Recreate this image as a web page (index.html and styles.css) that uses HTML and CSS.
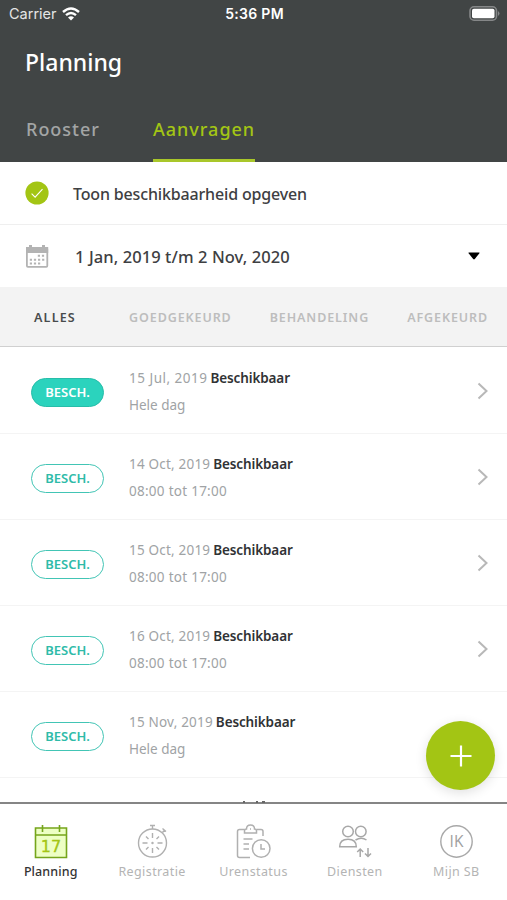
FILE: index.html
```html
<!DOCTYPE html>
<html lang="nl">
<head>
  <meta charset="utf-8" />
  <meta name="viewport" content="width=device-width,initial-scale=1" />
  <title>Planning</title>
  <link rel="stylesheet" href="styles.css">
</head>
<body>
  <div class="app">
    <header class="header">
      <div class="status-bar">
        <div class="carrier">
          <span>Carrier</span>
          <svg width="18" height="14" viewBox="0 0 18 14" fill="none" stroke="#fff" stroke-width="2.4">
            <path d="M1 5Q9-2 17 5M4 8.2Q9 3.8 14 8.2"/>
            <path d="M9 13.5L6 10.5Q9 8 12 10.5Z" fill="#fff" stroke="none"/>
          </svg>
        </div>
        <span class="time">5:36 PM</span>
        <svg class="battery" width="31" height="15" viewBox="0 0 31 15">
          <rect x="1" y=".8" width="26.5" height="13.4" rx="4" fill="none" stroke="#858788" stroke-width="1.6"/>
          <rect x="3" y="2.7" width="22.5" height="9.6" rx="1.8" fill="#fff"/>
          <path d="M29 5q3 2.5 0 5z" fill="#858788"/>
        </svg>
      </div>
      <h1>Planning</h1>
      <nav class="tabs">
        <a class="tab"><span>Rooster</span></a>
        <a class="tab active"><span>Aanvragen</span></a>
      </nav>
    </header>

    <div class="option">
      <svg class="check" width="24" height="24" viewBox="0 0 24 24">
        <circle cx="12" cy="12" r="11.6" fill="#a3c514"/>
        <path d="M6.6 12.6l3.5 3.5 7.4-8" fill="none" stroke="#fff" stroke-width="1.1"/>
      </svg>
      <span class="show-label">Toon beschikbaarheid opgeven</span>
    </div>
    <div class="option period">
      <svg class="cal" width="24" height="24" viewBox="0 0 24 24">
        <rect x="1.900" y="3" width="20.400" height="18.800" rx="1" fill="#fff" stroke="#b3b3b3" stroke-width="1.8"/>
        <path d="M1 2h22.200v6H1zM4 0h3v3H4zM17 0h3v3h-3z" fill="#b3b3b3"/>
        <path d="M12.800 10.800h7.400M4.800 14.800h15.400M4.800 18.600h11.500" stroke="#b3b3b3" stroke-width="2" stroke-dasharray="2.200 1.900"/>
      </svg>
      <span class="period-label">1 Jan, 2019 t/m 2 Nov, 2020</span>
      <svg class="caret" width="12" height="8" viewBox="0 0 12 8"><path d="M1 .4h10q1 0 .4.9L6.8 7q-.8.8-1.6 0L.6 1.3Q0 .4 1 .4z"/></svg>
    </div>

    <div class="filters">
      <span class="filter active">ALLES</span>
      <span class="filter">GOEDGEKEURD</span>
      <span class="filter">BEHANDELING</span>
      <span class="filter">AFGEKEURD</span>
    </div>

    <main class="list">
      <div class="row">
        <div class="badge filled"><span>BESCH.</span></div>
        <div class="info">
          <p class="date"><span class="short">15 Jul, 2019</span><b>Beschikbaar</b></p>
          <p class="day">Hele dag</p>
        </div>
        <svg class="chevron" width="12" height="18" viewBox="0 0 12 18"><path d="M1.5 1.5L9.5 9l-8 7.5"/></svg>
      </div>
      <div class="row">
        <div class="badge"><span>BESCH.</span></div>
        <div class="info">
          <p class="date"><span>14 Oct, 2019</span><b>Beschikbaar</b></p>
          <p class="hours">08:00 tot 17:00</p>
        </div>
        <svg class="chevron" width="12" height="18" viewBox="0 0 12 18"><path d="M1.5 1.5L9.5 9l-8 7.5"/></svg>
      </div>
      <div class="row">
        <div class="badge"><span>BESCH.</span></div>
        <div class="info">
          <p class="date"><span>15 Oct, 2019</span><b>Beschikbaar</b></p>
          <p class="hours">08:00 tot 17:00</p>
        </div>
        <svg class="chevron" width="12" height="18" viewBox="0 0 12 18"><path d="M1.5 1.5L9.5 9l-8 7.5"/></svg>
      </div>
      <div class="row">
        <div class="badge"><span>BESCH.</span></div>
        <div class="info">
          <p class="date"><span>16 Oct, 2019</span><b>Beschikbaar</b></p>
          <p class="hours">08:00 tot 17:00</p>
        </div>
        <svg class="chevron" width="12" height="18" viewBox="0 0 12 18"><path d="M1.5 1.5L9.5 9l-8 7.5"/></svg>
      </div>
      <div class="row">
        <div class="badge"><span>BESCH.</span></div>
        <div class="info">
          <p class="date"><span>15 Nov, 2019</span><b>Beschikbaar</b></p>
          <p class="day">Hele dag</p>
        </div>
      </div>
      <!-- top edge of the next line, cut off by the tab bar -->
      <svg class="peek" width="24" height="2" viewBox="0 0 24 2"><path d="M1 1h2M14 1h2M20 1h3" stroke="#666" stroke-width="2"/></svg>
      <button class="add" aria-label="Toevoegen">
        <svg width="22" height="22" viewBox="0 0 22 22" stroke="#fff" stroke-width="2.2"><path d="M11 .5v21M.5 11h21"/></svg>
      </button>
    </main>

    <nav class="tabbar">
      <a class="item planning">
        <svg width="36" height="36" viewBox="0 0 36 36" fill="none" stroke="#75a51b" stroke-width="1.6">
          <path d="M2.500 4h31v29.500h-31z" fill="#edffc4"/>
          <path d="M2 11h32M9.500 1v7M26.500 1v7"/>
          <text x="18" y="27.500" text-anchor="middle">17</text>
        </svg>
        <span>Planning</span>
      </a>
      <a class="item">
        <svg width="36" height="36" viewBox="0 0 36 36" fill="none" stroke="#b0b0b0" stroke-width="1.4">
          <circle cx="18.500" cy="19" r="14"/>
          <path d="M18.500 5V1.500M16 1.500h5M28.500 8.500l2-2.500M28.500 4.500l3.500 3"/>
          <path d="M18.500 9v5M18.500 24v5M8.500 19h5M23.500 19h5M12 12.500l2.500 2.500M25 12.500l-2.500 2.500M12 25.500l2.500-2.500M25 25.500l-2.500-2.500"/>
          <circle cx="18.500" cy="19" r=".5" fill="#b0b0b0"/>
        </svg>
        <span>Registratie</span>
      </a>
      <a class="item">
        <svg width="36" height="36" viewBox="0 0 36 36" fill="none" stroke="#b0b0b0" stroke-width="1.5">
          <path d="M15 33.500H4.500q-2 0-2-2V7.500q0-2 2-2h5.200M21.500 5.500h4.500q2 0 2 2V12"/>
          <path d="M9.500 9V7q0-2 2-2 0-4 4-4t4 4q2 0 2 2v2z"/>
          <path d="M15 5h1M8.500 15h9M8.500 20h5.500M8.500 25h5.500"/>
          <circle cx="26.200" cy="24.500" r="8.800"/>
          <path d="M26 20v5h4"/>
        </svg>
        <span>Urenstatus</span>
      </a>
      <a class="item">
        <svg width="36" height="36" viewBox="0 0 36 36" fill="none" stroke="#a8a8a8" stroke-width="1.5">
          <circle cx="11" cy="7.500" r="5.300"/>
          <circle cx="23.800" cy="7.500" r="5.300"/>
          <path d="M2.700 22.700q0-7.500 8.300-7.500t8.300 7.500zM18.500 16q6-3.500 11 0"/>
          <path d="M23.200 33v-8M20.200 28l3-3 3 3M31 24v8.500M28 29.500l3 3 3-3"/>
        </svg>
        <span>Diensten</span>
      </a>
      <a class="item">
        <svg width="36" height="36" viewBox="0 0 36 36" fill="none" stroke="#a8a8a8" stroke-width="1.4">
          <circle cx="18.500" cy="17.500" r="15.700"/>
          <text class="initials" x="18.500" y="23" text-anchor="middle">IK</text>
        </svg>
        <span>Mijn SB</span>
      </a>
    </nav>
  </div>
</body>
</html>
```

FILE: styles.css
```css
* { box-sizing: border-box; }
body {
  margin: 0;
  background: #fff;
  font-family: "Noto Sans", sans-serif;
  color: #3e4042;
}
.app {
  width: 507px; height: 900px;
  display: flex; flex-direction: column;
  overflow: hidden;
}
svg { display: block; flex: none; }
span, b { white-space: nowrap; }

/* header */
.header {
  height: 162px; flex: none;
  background: #414545; color: #fff;
}
.status-bar {
  height: 27px; padding: 0 7px 0 9px;
  display: grid; grid-template-columns: 1fr auto 1fr; align-items: center;
  font-family: Inter, sans-serif; font-size: 14.5px;
}
.carrier { display: flex; align-items: center; gap: 5px; color: #e4e5e5; }
.time { font-weight: 600; font-size: 14px; letter-spacing: .3px; }
.battery { justify-self: end; }
h1 {
  margin: 19px 0 0 25px;
  font-size: 23px; line-height: 32px; font-weight: 500;
}
.tabs {
  height: 84px; padding-left: 26px;
  display: flex; gap: 53px;
}
.tab {
  height: 84px; padding-top: 37px;
  font-size: 18px; line-height: 28px; font-weight: 500;
  letter-spacing: 1px; color: #a3a5a5;
}
.tab.active { color: #a3c514; border-bottom: 3px solid #a9c72a; }

/* options */
.option {
  height: 63px; flex: none;
  display: flex; align-items: center;
  border-bottom: 1px solid #efefef;
  padding: 0 27px 0 25px;
  font-size: 16px; font-weight: 500;
}
.option.period { height: 62px; border: none; font-size: 16.500px; }
.cal { margin-top: 2px; }
.show-label { margin-left: 24px; padding-top: 2px; letter-spacing: -.16px; }
.period-label { margin-left: 26px; letter-spacing: .08px; }
.caret { margin-left: auto; }

.filters {
  height: 60px; flex: none;
  display: flex; align-items: center; gap: 38px;
  padding: 2px 19px 0 34px;
  background: #f3f3f3; border-bottom: 1.500px solid #d0d0d0;
  font-size: 12.500px; font-weight: 600; color: #bdbdbd;
  letter-spacing: .9px;
}
.filter.active { margin-right: auto; color: #484b4c; letter-spacing: 1.200px; }

/* requests */
.list {
  position: relative; flex: none;
  height: 455px; padding-top: 1px;
}
.row {
  height: 86px; padding: 1px 18px 0 31px;
  display: flex; align-items: center;
  border-bottom: 1px solid #f4f4f4;
}
.badge {
  width: 73px; height: 29px; margin-top: 2px;
  display: flex; align-items: center; justify-content: center;
  border: 1.5px solid #42c5b5; border-radius: 15px;
  color: #2fbba9; font-size: 13px; font-weight: 600;
}
.badge.filled { background: #2bd3bd; border-color: #27bda9; color: #fff; }
.info { margin-left: 25px; padding-top: 2px; }
.info p { margin: 0; font-size: 13.500px; line-height: 27px; color: #a0a3a5; }
.date { display: flex; gap: 3px; }
.date span { letter-spacing: .2px; }
.date .short { letter-spacing: .5px; }
.info .hours { letter-spacing: .27px; }
.info b { font-weight: 600; color: #303234; letter-spacing: -.12px; }
.chevron { margin-left: auto; fill: none; stroke: #b8b8b8; stroke-width: 2; }
.peek { margin: 23px auto 0; }

.add {
  position: absolute; right: 12px; top: 374px;
  width: 69px; height: 69px; padding: 0;
  display: flex; align-items: center; justify-content: center;
  border: none; border-radius: 50%;
  background: #a3c514; box-shadow: 0 3px 12px rgba(0,0,0,.12);
}

/* bottom navigation */
.tabbar {
  flex: 1; display: grid; grid-template-columns: repeat(5, 1fr);
  border-top: 2px solid #858585;
  background: #fff;
}
.item {
  display: flex; flex-direction: column; align-items: center;
  padding-top: 20px;
  font-size: 12.500px; line-height: 24px; color: #b4b4b4;
  letter-spacing: .4px;
}
.item .initials {
  stroke: none; fill: #a0a0a0;
  font-family: "Open Sans", sans-serif; font-size: 15.500px; font-weight: 500; letter-spacing: 0;
}
.item.planning { color: #333; font-weight: 500; letter-spacing: .1px; }
.item.planning text {
  stroke: #a3c514; stroke-width: .3; fill: #a3c514;
  font-family: "DejaVu Sans", sans-serif; font-size: 16px; letter-spacing: 0;
}
```
